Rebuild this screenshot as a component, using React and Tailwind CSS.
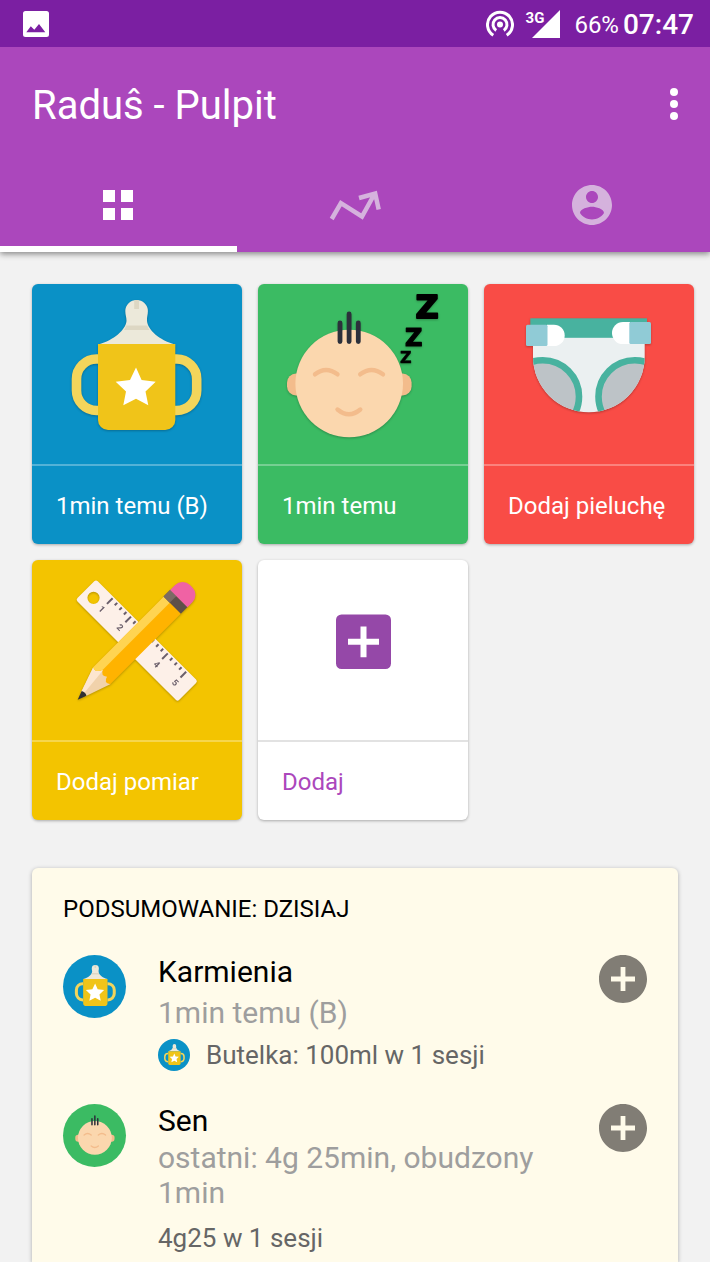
import React from "react";

function Bottle({ bigStar = false }) {
  return (
    <g>
      <path d="M66 75H64.500A20 20 0 0 0 44.500 95V106.500A20 20 0 0 0 64.500 126.500H66" fill="none" stroke="#f3d55b" strokeWidth="9.600" />
      <path d="M143 75H144.700A20 20 0 0 1 164.700 95V106.500A20 20 0 0 1 144.700 126.500H143" fill="none" stroke="#f3d55b" strokeWidth="9.600" />
      <path d="M66.500 60.500C82 56 93.500 46 94.500 37C94.500 33 93.300 31 93.300 27A11.300 11 0 0 1 115.900 27C115.900 31 114.700 33 115 37C116 46 127 56 143 60.500Z" fill="#ece9da" />
      <path d="M102.200 16.400Q104.600 15.800 107 16.400V25H102.200Z M94.200 41.500H115.200Q116 44 117.500 46H92Q93.500 44 94.200 41.500Z" fill="#ddd7c3" />
      <path d="M66 60H143.300V136A10 10 0 0 1 133.300 146H76A10 10 0 0 1 66 136Z" fill="#f0c419" />
      <path
        d="M104 83.600L109.600 95.900L123.700 97.800L113.500 107.500L116.300 121.200L104 114.700L91.300 121.200L94 107.500L83.700 97.800L98 95.900Z"
        transform={bigStar ? "translate(104 103) scale(1.450) translate(-104 -103)" : undefined}
        fill="#fff"
      />
    </g>
  );
}

function Baby() {
  return (
    <g>
      <rect x="29" y="89.500" width="22" height="22" rx="9" fill="#f3bc8c" />
      <rect x="131.600" y="89.500" width="22" height="22" rx="9" fill="#f3bc8c" />
      <circle cx="91.200" cy="99.500" r="53.800" fill="#fbd7ae" />
      <path d="M82 39V57.500M91.100 30V57.500M100.300 39V57.500" stroke="#2c303b" strokeWidth="4.800" strokeLinecap="round" />
      <path d="M57 90.300Q68 81.500 79.500 90.300M102.200 90.300Q113.500 81.500 125 90.300M79.500 125.500Q91 135 102.300 125.500" fill="none" stroke="#f3bc8c" strokeWidth="4.400" strokeLinecap="round" />
    </g>
  );
}

function Snore() {
  return (
    <g fill="#000" stroke="#000" strokeLinejoin="round" fontWeight="700" className="font-['DejaVu_Sans']">
      <text x="157.500" y="33.800" fontSize="32" strokeWidth="1.800">Z</text>
      <text x="147" y="62" fontSize="24" strokeWidth="1.200">Z</text>
      <text x="142" y="78.500" fontSize="16" strokeWidth="0.500">Z</text>
    </g>
  );
}

function Diaper() {
  return (
    <g>
      <clipPath id="diaper-body">
        <path d="M49 50H160.700V72.500A55.850 55.850 0 0 1 49 72.500Z" />
      </clipPath>
      <g clipPath="url(#diaper-body)">
        <rect x="48" y="50" width="114" height="80" fill="#ebf0f1" />
        <circle cx="58.700" cy="112.600" r="36.300" fill="#bdc3c7" stroke="#48b29f" strokeWidth="6.600" />
        <circle cx="150.800" cy="112.600" r="36.300" fill="#bdc3c7" stroke="#48b29f" strokeWidth="6.600" />
      </g>
      <rect x="46.300" y="34.300" width="116.700" height="19.500" fill="#48b29f" />
      <path d="M63 40.700H70A10.700 10.700 0 0 1 70 62.100H63Z" fill="#fff" />
      <path d="M146 38.100H139A11 11 0 0 0 139 60.100H146Z" fill="#fff" />
      <rect x="42" y="40.700" width="21.500" height="21.400" rx="1.500" fill="#90cbd6" />
      <rect x="145.300" y="38.100" width="21.700" height="22" rx="1.500" fill="#90cbd6" />
    </g>
  );
}

const longTicks = [25, 51, 77, 103, 129];
const shortTicks = [31.5, 38, 44.5, 57.5, 64, 70.5, 83.5, 90, 96.5, 109.5, 116, 122.5];

function RulerPencil() {
  return (
    <g>
      <g transform="translate(64 19.500) rotate(45)">
        <path fillRule="evenodd" d="M2.500 0H141.500A2.500 2.500 0 0 1 144 2.500V26.200A2.500 2.500 0 0 1 141.500 28.700H2.500A2.500 2.500 0 0 1 0 26.200V2.500A2.500 2.500 0 0 1 2.500 0ZM11.200 8.600A6.100 6.100 0 1 0 11.200 20.800A6.100 6.100 0 1 0 11.200 8.600Z" fill="#fdf0e8" />
        <g stroke="#6b5f6b" strokeWidth="2">
          {longTicks.map((x) => <path key={x} d={`M${x} 1.500V9.500`} />)}
          {shortTicks.map((x) => <path key={x} d={`M${x} 1.500V5`} />)}
        </g>
        <g fill="#6b5f6b" fontSize="9" fontWeight="700" textAnchor="middle">
          {longTicks.map((x, i) => <text key={x} x={x} y="20">{i + 1}</text>)}
        </g>
      </g>
      <g transform="translate(45.700 139.700) rotate(-45)">
        <path d="M8 -3L34 -12L44 0L34 12L8 3Z" fill="#f1d2ab" />
        <path d="M8 -3L34 -12L40 -3L8 0Z" fill="#fde6cf" />
        <path d="M0 0L9 -3.400Q11 0 9 3.400Z" fill="#2f3033" />
        <path d="M34 -12H134V12H34Q30 6 37 4.500Q33 -1 39 -3.500Q31 -6 34 -12Z" fill="#ffb300" />
        <path d="M34 -12H134V-3.500H39Q31 -6 34 -12Z" fill="#ffd452" />
        <rect x="133.600" y="-12.200" width="9.600" height="24.400" fill="#5e5049" />
        <rect x="133.600" y="-12.200" width="9.600" height="8.700" fill="#7b6b64" />
        <path d="M143 -12.200H150A10.500 10.500 0 0 1 160.500 -1.700V1.700A10.500 10.500 0 0 1 150 12.200H143Z" fill="#f062a4" />
      </g>
    </g>
  );
}

function AddBox() {
  return (
    <path fillRule="evenodd" fill="#9548a8" d="M83.500 54.500H127.500A5.500 5.500 0 0 1 133 60V103.500A5.500 5.500 0 0 1 127.500 109H83.500A5.500 5.500 0 0 1 78 103.500V60A5.500 5.500 0 0 1 83.500 54.500ZM102.500 66.500V78.700H90V84.800H102.500V97.300H108.500V84.800H121V78.700H108.500V66.500Z" />
  );
}

const tiles = [
  { label: "1min temu (B)", color: "bg-[#0a91c6] text-white", line: "border-white/30", art: <Bottle /> },
  { label: "1min temu", color: "bg-[#3bbb63] text-white", line: "border-white/30", art: <><Baby /><Snore /></> },
  { label: "Dodaj pieluchę", color: "bg-[#f94c46] text-white", line: "border-white/30", art: <Diaper /> },
  { label: "Dodaj pomiar", color: "bg-[#f3c400] text-white", line: "border-white/30", art: <RulerPencil /> },
  { label: "Dodaj", color: "bg-white text-[#ab47bc]", line: "border-[#e2e2e2]", art: <AddBox /> },
];

function Tile({ label, color, line, art }) {
  const shadow = label === "Dodaj" ? "" : "drop-shadow-[0_1px_1px_rgba(0,0,0,0.25)]";
  return (
    <button type="button" className={`flex flex-col overflow-hidden rounded-md text-left text-2xl shadow-[0_1px_3px_rgba(0,0,0,0.3)] ${color}`}>
      <svg viewBox="0 0 210 180" className={`block w-full ${shadow}`} aria-hidden="true">{art}</svg>
      <span className={`flex h-20 w-full items-center border-t-2 px-6 pt-0.5 whitespace-nowrap ${line}`}>{label}</span>
    </button>
  );
}

function BottleBadge({ className }) {
  return (
    <span className={`block shrink-0 rounded-full bg-[#0a91c6] ${className}`}>
      <svg viewBox="2 -16 200 200" className="block size-full" aria-hidden="true"><Bottle bigStar /></svg>
    </span>
  );
}

function AddButton({ label }) {
  return (
    <button type="button" aria-label={label} className="size-12 shrink-0 text-[#817d75]">
      <svg viewBox="2 2 20 20" fill="currentColor" className="size-full">
        <path d="M12 2C6.480 2 2 6.480 2 12s4.480 10 10 10 10-4.480 10-10S17.520 2 12 2zm5 11h-4v4h-2v-4H7v-2h4V7h2v4h4v2z" />
      </svg>
    </button>
  );
}

export default function App() {
  return (
    <div className="flex min-h-screen flex-col bg-[#f2f2f2] font-[Roboto,sans-serif]">
      <header className="relative bg-[#ab47bc] text-white shadow-[0_2px_6px_rgba(0,0,0,0.45)]">
        <div className="flex h-[47px] items-center bg-[#7b1fa2] pr-4 pl-[23px]">
          <svg viewBox="0 0 26 26" fill="currentColor" className="size-[26px]" aria-hidden="true">
            <path fillRule="evenodd" d="M2.500 0H23.500A2.500 2.500 0 0 1 26 2.500V23.500A2.500 2.500 0 0 1 23.500 26H2.500A2.500 2.500 0 0 1 0 23.500V2.500A2.500 2.500 0 0 1 2.500 0ZM3.300 21.300H22.300L16 13L11.300 18.700L7.800 15.200Z" />
          </svg>
          <div className="ml-auto flex items-center">
            <svg viewBox="0 0 28 28" fill="none" stroke="currentColor" strokeWidth="3" className="size-7" aria-hidden="true">
              <path d="M7.300 25.200A12.500 12.500 0 1 1 20.700 25.200" />
              <path d="M10.200 20.400A7 7 0 1 1 17.800 20.400" />
              <circle cx="14" cy="14.500" r="3" fill="currentColor" stroke="none" />
            </svg>
            <div className="ml-3 flex items-start">
              <span className="text-[15px] leading-4 font-bold">3G</span>
              <svg viewBox="0 0 28 28" fill="currentColor" className="-ml-3 size-7" aria-hidden="true"><path d="M28 0V28H0Z" /></svg>
            </div>
            <span className="ml-3.5 pt-0.5 text-2xl">66%</span>
            <time className="ml-1 pt-0.5 text-[28px] font-medium">07:47</time>
          </div>
        </div>
        <div className="flex h-[113px] items-center justify-between pr-7 pl-8">
          <h1 className="pt-1 text-[40px]">Raduŝ - Pulpit</h1>
          <button type="button" aria-label="Menu" className="w-4">
            <svg viewBox="0 0 16 32" fill="currentColor" className="h-8 w-4">
              <circle cx="8" cy="4" r="4" /><circle cx="8" cy="16" r="4" /><circle cx="8" cy="28" r="4" />
            </svg>
          </button>
        </div>
        <div role="tablist" className="grid h-[92px] grid-cols-3">
          <button type="button" role="tab" aria-selected="true" aria-label="Pulpit" className="flex items-center justify-center border-b-6 border-white pt-1">
            <svg viewBox="0 0 30 30" fill="currentColor" className="size-[30px]"><path d="M0 0H12V12H0ZM18 0H30V12H18ZM0 18H12V30H0ZM18 18H30V30H18Z" /></svg>
          </button>
          <button type="button" role="tab" aria-selected="false" aria-label="Wykresy" className="flex items-center justify-center border-b-6 border-transparent pt-1 text-[#d5b2dd]">
            <svg viewBox="0 0 52 32" fill="none" stroke="currentColor" strokeWidth="4.500" className="h-8 w-[52px]">
              <path d="M2.700 30L11.900 14.200L33 27.500L45.200 5.500M30 9L46.200 4.500L49.700 20.500" />
            </svg>
          </button>
          <button type="button" role="tab" aria-selected="false" aria-label="Profil" className="flex items-center justify-center border-b-6 border-transparent pt-1 text-[#d5b2dd]">
            <svg viewBox="2 2 20 20" fill="currentColor" className="size-10">
              <path d="M12 2C6.480 2 2 6.480 2 12s4.480 10 10 10 10-4.480 10-10S17.520 2 12 2zm0 3c1.660 0 3 1.340 3 3s-1.340 3-3 3-3-1.340-3-3 1.340-3 3-3zm0 14.200c-2.500 0-4.710-1.280-6-3.220.03-1.990 4-3.080 6-3.080 1.990 0 5.970 1.090 6 3.080-1.290 1.940-3.500 3.220-6 3.220z" />
            </svg>
          </button>
        </div>
      </header>
      <main className="flex flex-1 flex-col pt-8">
        <section className="grid grid-cols-3 gap-4 pr-4 pl-8">
          {tiles.map((tile) => <Tile key={tile.label} {...tile} />)}
        </section>
        <section className="mx-8 mt-12 flex-1 rounded-t-md bg-[#fffbea] px-[31px] pt-[25px] shadow-[0_1px_4px_rgba(0,0,0,0.3)]">
          <h2 className="text-2xl text-black">PODSUMOWANIE: DZISIAJ</h2>
          <div className="mt-[30px] flex items-start">
            <BottleBadge className="size-[63px]" />
            <div className="ml-8 flex-1">
              <h3 className="text-[30px] leading-[34px] text-black">Karmienia</h3>
              <p className="mt-1.5 text-[30px] leading-9 text-[#9e9e9e]">1min temu (B)</p>
              <div className="mt-2 flex items-center gap-4">
                <BottleBadge className="size-8" />
                <p className="text-[26px] leading-8 text-[#666]">Butelka: 100ml w 1 sesji</p>
              </div>
            </div>
            <AddButton label="Dodaj karmienie" />
          </div>
          <div className="mt-[33px] flex items-start">
            <span className="block size-[63px] shrink-0 rounded-full bg-[#3bbb63]">
              <svg viewBox="-10 -8 200 200" className="block size-full" aria-hidden="true"><Baby /></svg>
            </span>
            <div className="ml-8 flex-1">
              <h3 className="text-[30px] leading-[34px] text-black">Sen</h3>
              <p className="mt-0.5 text-[30px] leading-[35px] text-[#9e9e9e]">ostatni: 4g 25min, obudzony 1min</p>
              <p className="mt-3 text-[26px] leading-8 text-[#666]">4g25 w 1 sesji</p>
            </div>
            <AddButton label="Dodaj sen" />
          </div>
        </section>
      </main>
    </div>
  );
}
